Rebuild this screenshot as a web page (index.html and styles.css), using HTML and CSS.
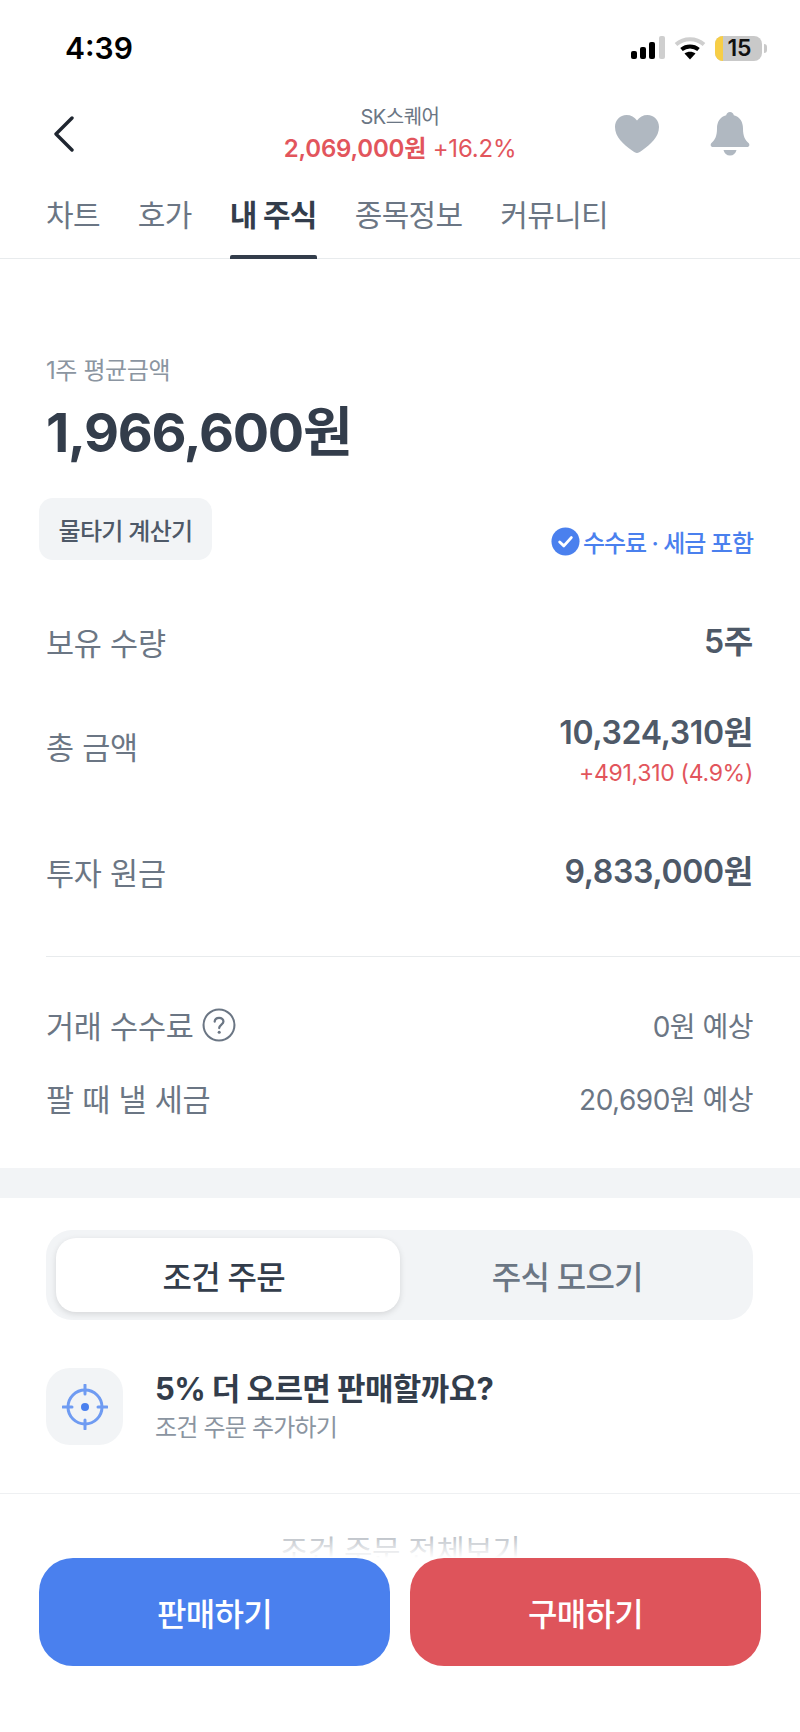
FILE: index.html
```html
<!DOCTYPE html>
<html lang="ko">
<head>
  <meta charset="UTF-8" />
  <meta name="viewport" content="width=device-width, initial-scale=1.0"/>
  <title>내 주식 - SK스퀘어</title>
  <link rel="stylesheet" href="styles.css">
</head>
<body>
  <div class="page">
    <div class="status-bar">
      <span class="time">4:39</span>
      <div class="status-icons">
        <svg class="signal" width="34" height="24" viewBox="0 0 34 24">
          <rect x="0" y="15" width="6" height="8" rx="2" fill="#000"/>
          <rect x="9" y="11" width="6" height="12" rx="2" fill="#000"/>
          <rect x="18" y="6" width="6" height="17" rx="2" fill="#000"/>
          <rect x="28" y="0" width="6" height="23" rx="2" fill="#cfcfcf"/>
        </svg>
        <svg class="wifi" width="32" height="24" viewBox="0 0 32 24">
          <path d="M2 8.5C10 1.5 22 1.5 30 8.5" fill="none" stroke="#cfcfcf" stroke-width="4"/>
          <path d="M7.5 13.5C12.5 9.5 19.5 9.5 24.5 13.5" fill="none" stroke="#000" stroke-width="4"/>
          <path d="M16 23.5L10.5 17.5C13.5 15 18.5 15 21.5 17.5Z" fill="#000"/>
        </svg>
        <div class="battery">
          <div class="battery-body"><span class="battery-level"></span><span class="battery-num">15</span></div>
          <span class="battery-nub"></span>
        </div>
      </div>
    </div>

    <div class="header">
      <svg class="back" width="24" height="36" viewBox="0 0 24 36">
        <path d="M20 2L4 18L20 34" fill="none" stroke="#1f2630" stroke-width="3.4" stroke-linecap="round" stroke-linejoin="round"/>
      </svg>
      <div class="header-title">
        <div class="stock-name">SK스퀘어</div>
        <div class="stock-price"><strong>2,069,000원</strong> +16.2%</div>
      </div>
      <svg class="heart" width="46" height="40" viewBox="0 0 46 40">
        <path d="M23 39C21.500 39 20 38 18 36.500C9 30 1 23 1 13C1 6 6 1 12.500 1C17 1 20.500 3 23 6.500C25.500 3 29 1 33.500 1C40 1 45 6 45 13C45 23 37 30 28 36.500C26 38 24.500 39 23 39Z" fill="#b0b8c1"/>
      </svg>
      <svg class="bell" width="40" height="44" viewBox="0 0 40 44">
        <path d="M20 0C22 0 23.500 1.300 23.800 3.300C30 5 33 10 33 16.500C33 24 35 28 38.500 31C40 32.500 39.500 35 37 35H3C0.500 35 0 32.500 1.500 31C5 28 7 24 7 16.500C7 10 10 5 16.200 3.300C16.500 1.300 18 0 20 0Z" fill="#b0b8c1"/>
        <path d="M13.500 38H26.500C25.800 41.500 23.300 43.500 20 43.500C16.700 43.500 14.200 41.500 13.500 38Z" fill="#b0b8c1"/>
      </svg>
    </div>

    <div class="tabs">
      <div class="tab">차트</div>
      <div class="tab">호가</div>
      <div class="tab active">내 주식</div>
      <div class="tab">종목정보</div>
      <div class="tab">커뮤니티</div>
    </div>

    <div class="summary">
      <div class="avg-label">1주 평균금액</div>
      <div class="avg-price">1,966,600원</div>
      <div class="avg-tools">
        <div class="calc-btn">물타기 계산기</div>
        <div class="fee-check">
          <svg width="29" height="29" viewBox="0 0 30 30">
            <circle cx="15" cy="15" r="14.500" fill="#4a80ee"/>
            <path d="M9 15.500L13.300 19.500L21 11" fill="none" stroke="#fff" stroke-width="3" stroke-linecap="round" stroke-linejoin="round"/>
          </svg>
          <span>수수료 · 세금 포함</span>
        </div>
      </div>
    </div>

    <div class="holdings">
      <div class="row row-qty">
        <span class="row-label">보유 수량</span>
        <span class="row-value">5주</span>
      </div>
      <div class="row row-total">
        <span class="row-label">총 금액</span>
        <div class="row-right">
          <div class="row-value">10,324,310원</div>
          <div class="row-gain">+491,310 (4.9%)</div>
        </div>
      </div>
      <div class="row row-principal">
        <span class="row-label">투자 원금</span>
        <span class="row-value">9,833,000원</span>
      </div>
    </div>

    <div class="fees">
      <div class="row">
        <span class="row-label">거래 수수료
          <svg class="help" width="34" height="34" viewBox="0 0 33 33">
            <circle cx="16.500" cy="16.500" r="15" fill="none" stroke="#6b7684" stroke-width="2"/>
            <path d="M12.300 13.300C12.500 10.800 14.300 9.500 16.600 9.500C19 9.500 20.800 11 20.800 13.100C20.800 16 16.700 16.200 16.700 19.500" fill="none" stroke="#6b7684" stroke-width="2.200" stroke-linecap="round"/>
            <circle cx="16.700" cy="23.500" r="1.500" fill="#6b7684"/>
          </svg>
        </span>
        <span class="fee-value">0원 예상</span>
      </div>
      <div class="row">
        <span class="row-label">팔 때 낼 세금</span>
        <span class="fee-value">20,690원 예상</span>
      </div>
    </div>

    <div class="band"></div>

    <div class="orders">
      <div class="segment">
        <div class="segment-item active">조건 주문</div>
        <div class="segment-item">주식 모으기</div>
      </div>
      <div class="order-add">
        <div class="order-icon">
          <svg width="46" height="46" viewBox="0 0 46 46">
            <circle cx="23" cy="23" r="17" fill="none" stroke="#6f9bf2" stroke-width="3"/>
            <path d="M23 1V10M23 36V45M1 23H10M36 23H45" fill="none" stroke="#6f9bf2" stroke-width="3" stroke-linecap="round"/>
            <circle cx="23" cy="23" r="4" fill="#4a80ee"/>
          </svg>
        </div>
        <div class="order-text">
          <div class="order-title">5% 더 오르면 판매할까요?</div>
          <div class="order-sub">조건 주문 추가하기</div>
        </div>
      </div>
    </div>

    <div class="view-all">조건 주문 전체보기</div>

    <div class="bottom-bar">
      <div class="trade-btn sell">판매하기</div>
      <div class="trade-btn buy">구매하기</div>
    </div>
  </div>
</body>
</html>
```

FILE: styles.css
```css
* {
  box-sizing: border-box;
  font-family: 'Inter', 'Noto Sans CJK KR', sans-serif;
}

body {
  margin: 0;
  background: #fff;
}

.page {
  position: relative;
  width: 800px;
  height: 1732px;
  overflow: hidden;
  background: #fff;
}

/* status bar */
.status-bar {
  height: 96px;
  padding: 0 33px 0 65px;
  display: flex;
  align-items: center;
  justify-content: space-between;
}

.time {
  font-size: 30px;
  font-weight: 600;
  color: #000;
}

.status-icons {
  display: flex;
  align-items: center;
  gap: 9px;
}

.battery {
  display: flex;
  align-items: center;
  gap: 2px;
}

.battery-body {
  position: relative;
  width: 47px;
  height: 25px;
  border-radius: 8px;
  background: #c9c9c9;
  overflow: hidden;
  display: flex;
  align-items: center;
  justify-content: center;
}

.battery-level {
  position: absolute;
  left: 0;
  top: 0;
  bottom: 0;
  width: 8px;
  background: #f7ce46;
}

.battery-num {
  position: relative;
  font-size: 23px;
  font-weight: 600;
  color: #111;
  padding-left: 2px;
}

.battery-nub {
  width: 3px;
  height: 9px;
  border-radius: 0 3px 3px 0;
  background: #c9c9c9;
}

/* header */
.header {
  height: 72px;
  padding: 3px 50px 0 52px;
  display: flex;
  align-items: center;
}

.back {
  flex: none;
}

.header-title {
  flex: 1;
  text-align: center;
  margin-left: 160px;
  margin-right: 50px;
}

.stock-name {
  font-size: 20px;
  line-height: 30px;
  color: #6b7684;
  letter-spacing: -0.5px;
}

.stock-price {
  font-size: 24px;
  line-height: 34px;
  color: #e2555c;
  letter-spacing: -0.2px;
  white-space: nowrap;
}

.stock-price strong {
  font-weight: 600;
}

.heart {
  flex: none;
  margin-right: 50px;
}

/* tabs */
.tabs {
  height: 91px;
  padding: 0 46px;
  display: flex;
  gap: 38px;
  border-bottom: 1px solid #e8ebed;
}

.tab {
  position: relative;
  padding-top: 26px;
  font-size: 30px;
  line-height: 42px;
  letter-spacing: -0.700px;
  color: #6b7684;
  white-space: nowrap;
}

.tab.active {
  font-weight: 700;
  color: #333d4b;
}

.tab.active::after {
  content: "";
  position: absolute;
  left: 0;
  right: 0;
  bottom: -1px;
  height: 4px;
  border-radius: 2px 2px 0 0;
  background: #333d4b;
}

/* summary */
.summary {
  padding: 96px 47px 0 46px;
}

.avg-label {
  font-size: 24px;
  line-height: 32px;
  letter-spacing: -0.400px;
  color: #8b95a1;
}

.avg-price {
  margin-top: 11px;
  font-size: 54px;
  line-height: 70px;
  font-weight: 700;
  letter-spacing: -1.300px;
  color: #333d4b;
}

.avg-tools {
  margin: 30px 0 0 -7px;
  display: flex;
  align-items: flex-end;
  justify-content: space-between;
}

.calc-btn {
  width: 173px;
  height: 62px;
  border-radius: 14px;
  background: #f2f4f6;
  color: #4e5968;
  font-size: 24px;
  font-weight: 500;
  letter-spacing: -0.700px;
  display: flex;
  align-items: center;
  justify-content: center;
}

.fee-check {
  display: flex;
  align-items: center;
  gap: 3px;
  color: #4a80ee;
  font-size: 24px;
  font-weight: 500;
  letter-spacing: -1px;
  margin-bottom: 1px;
}

/* rows */
.row {
  display: flex;
  align-items: center;
  justify-content: space-between;
}

.row-label {
  display: flex;
  align-items: center;
  gap: 8px;
  font-size: 30.500px;
  letter-spacing: -0.200px;
  color: #6b7684;
}

.row-value {
  font-size: 32px;
  line-height: 46px;
  font-weight: 600;
  letter-spacing: -0.300px;
  color: #4e5968;
  text-align: right;
}

.holdings {
  padding: 0 47px 0 46px;
}

.row-qty {
  height: 72px;
  margin-top: 46px;
}

.row-total {
  height: 96px;
  margin-top: 20px;
}

.row-right {
  padding-top: 8px;
}

.row-gain {
  font-size: 23px;
  line-height: 34px;
  letter-spacing: -0.300px;
  color: #e2555c;
  text-align: right;
}

.row-principal {
  height: 72px;
  margin-top: 42px;
}

.fees {
  margin: 48px 0 0 46px;
  padding: 48px 47px 0 0;
  border-top: 1px solid #e8ebed;
  display: flex;
  flex-direction: column;
  gap: 33px;
}

.fees .row {
  height: 40px;
}

.fee-value {
  font-size: 28px;
  letter-spacing: -0.500px;
  color: #6b7684;
}

.band {
  height: 30px;
  margin-top: 50px;
  background: #f2f4f6;
}

/* orders */
.orders {
  border-bottom: 1px solid #eef0f2;
  padding: 32px 47px 48px 46px;
}

.segment {
  height: 90px;
  padding: 8px 10px;
  border-radius: 26px;
  background: #f2f4f6;
  display: flex;
}

.segment-item {
  flex: 1;
  padding-right: 8px;
  border-radius: 20px;
  font-size: 32px;
  font-weight: 500;
  letter-spacing: -0.800px;
  color: #6b7684;
  display: flex;
  align-items: center;
  justify-content: center;
}

.segment-item.active {
  background: #fff;
  color: #333d4b;
  box-shadow: 0 2px 6px rgba(0, 0, 0, 0.12);
}

.order-add {
  margin-top: 48px;
  display: flex;
  align-items: center;
  gap: 32px;
}

.order-icon {
  width: 77px;
  height: 77px;
  border-radius: 24px;
  background: #f2f4f6;
  display: flex;
  align-items: center;
  justify-content: center;
}

.order-title {
  font-size: 31px;
  line-height: 40px;
  font-weight: 700;
  letter-spacing: -0.600px;
  color: #333d4b;
}

.order-sub {
  margin-top: 2px;
  font-size: 24px;
  line-height: 34px;
  letter-spacing: -0.800px;
  color: #8b95a1;
}

.view-all {
  margin-top: 36px;
  text-align: center;
  font-size: 31px;
  line-height: 42px;
  letter-spacing: -0.500px;
  color: #6b7684;
}

/* bottom bar sits over the scrolled content */
.bottom-bar {
  position: absolute;
  left: 0;
  right: 0;
  bottom: 0;
  height: 222px;
  padding: 48px 39px 0;
  display: flex;
  gap: 20px;
  background: linear-gradient(to bottom, rgba(255, 255, 255, 0) 0, #fff 48px);
}

.trade-btn {
  flex: 1;
  height: 108px;
  border-radius: 34px;
  color: #fff;
  font-size: 32px;
  font-weight: 500;
  letter-spacing: -0.700px;
  display: flex;
  align-items: center;
  justify-content: center;
}

.sell {
  background: #4a80ee;
}

.buy {
  background: #de545b;
}
```
